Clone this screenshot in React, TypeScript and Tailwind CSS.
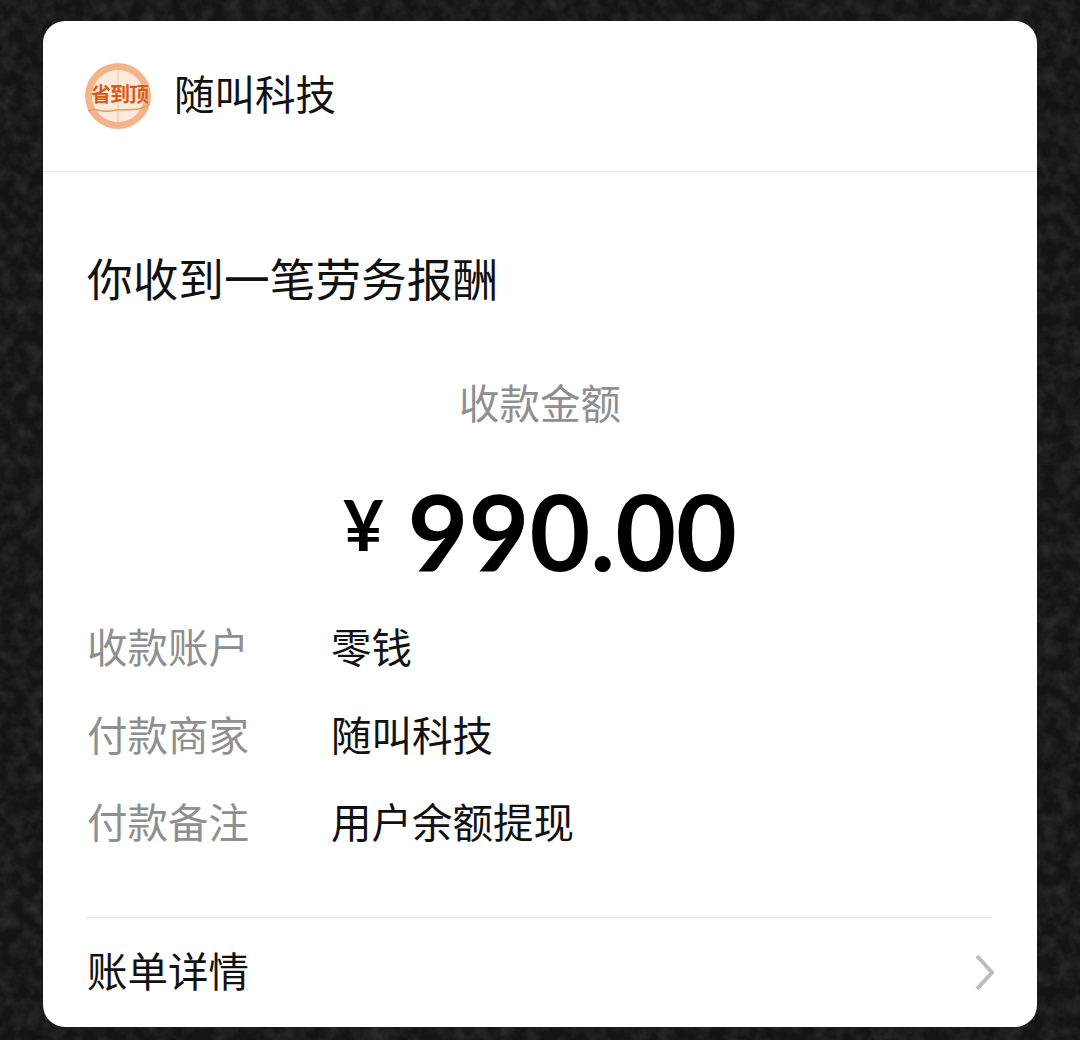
import React from 'react';

const cjk = "font-['Noto_Sans_CJK_SC','Noto_Sans',sans-serif]";

const rows = [
    { label: '收款账户', value: '零钱' },
    { label: '付款商家', value: '随叫科技' },
    { label: '付款备注', value: '用户余额提现' },
];

// Leather-like noise behind the card
const Backdrop = () => (
    <svg className="absolute inset-0 w-full h-full" aria-hidden="true">
        <filter id="grain" x="0" y="0" width="100%" height="100%">
            <feTurbulence type="fractalNoise" baseFrequency="0.07" numOctaves="3" seed="7" />
            <feColorMatrix
                type="matrix"
                values="0 0 0 0 1  0 0 0 0 1  0 0 0 0 1  0.9 0 0 0 -0.3"
            />
        </filter>
        <rect width="100%" height="100%" fill="#141414" />
        <rect width="100%" height="100%" filter="url(#grain)" opacity="0.2" />
    </svg>
);

const Logo = () => (
    <div className="relative w-[66px] h-[66px] shrink-0 rounded-full bg-[#f3b48a] flex items-center justify-center">
        <div className="absolute inset-[7px] rounded-full bg-[#fbeadd]" />
        <div className="absolute left-[32px] top-[7px] bottom-[7px] w-[2px] bg-[#f8d6bb]" />
        <div className="absolute top-[32px] left-[7px] right-[7px] h-[2px] bg-[#f8d6bb]" />
        <svg className="absolute left-[2px] top-[36px]" width="64" height="16" viewBox="0 0 64 16" fill="none">
            <path d="M1 12 C10 8 14 14 24 12 C38 9 50 14 63 5" stroke="#e8a04a" strokeWidth="1.5" />
        </svg>
        <span className="relative -mt-[4px] ml-[3px] whitespace-nowrap text-[20px] leading-none font-bold tracking-[-1px] text-[#d9581c] [text-shadow:0_0_1px_#ffe9a8]">
            省到顶
        </span>
    </div>
);

export default function App() {
    return (
        <div className={`relative h-[1040px] w-[1080px] overflow-hidden pt-[21px] pl-[43px] ${cjk}`}>
            <Backdrop />
            <div className="relative w-[994px] h-[1006px] rounded-[22px] bg-white flex flex-col">
                <div className="h-[151px] shrink-0 flex items-center gap-[23px] pl-[42px] border-b border-[#ececec]">
                    <Logo />
                    <span className="-mt-[5px] text-[40.5px] leading-none text-[#111111]">随叫科技</span>
                </div>

                <div className="pl-[44px] pt-[79px] text-[45.7px] leading-[52px] text-[#111111]">
                    你收到一笔劳务报酬
                </div>

                <div className="mt-[75px] text-center text-[40.5px] leading-[48px] text-[#8f8f8f]">
                    收款金额
                </div>

                <div className="mt-[44px] h-[120px] flex items-center justify-center text-black font-['Lato',sans-serif]">
                    <span className="text-[70px] leading-none font-bold mr-[24px] -mt-[12px]">¥</span>
                    <span className="text-[105px] leading-none font-bold">990.00</span>
                </div>

                <div className="mt-[32px] flex flex-col gap-[39.5px] pl-[44px]">
                    {rows.map((row) => (
                        <div key={row.label} className="flex text-[40.5px] leading-[48px]">
                            <span className="w-[244px] text-[#8f8f8f]">{row.label}</span>
                            <span className="text-[#111111]">{row.value}</span>
                        </div>
                    ))}
                </div>

                <div className="mt-auto ml-[43px] mr-[45px] border-t border-[#e6e6e6] h-[110px] flex items-center justify-between pb-[4px]">
                    <span className="pl-[1px] text-[40.5px] leading-none text-[#111111]">账单详情</span>
                    <svg width="20" height="40" viewBox="0 0 20 40" className="-mr-[2px] mt-[4px]" fill="none">
                        <path d="M3 3 L18 19.5 L3 36" stroke="#bdbdbd" strokeWidth="4" />
                    </svg>
                </div>
            </div>
        </div>
    );
}
